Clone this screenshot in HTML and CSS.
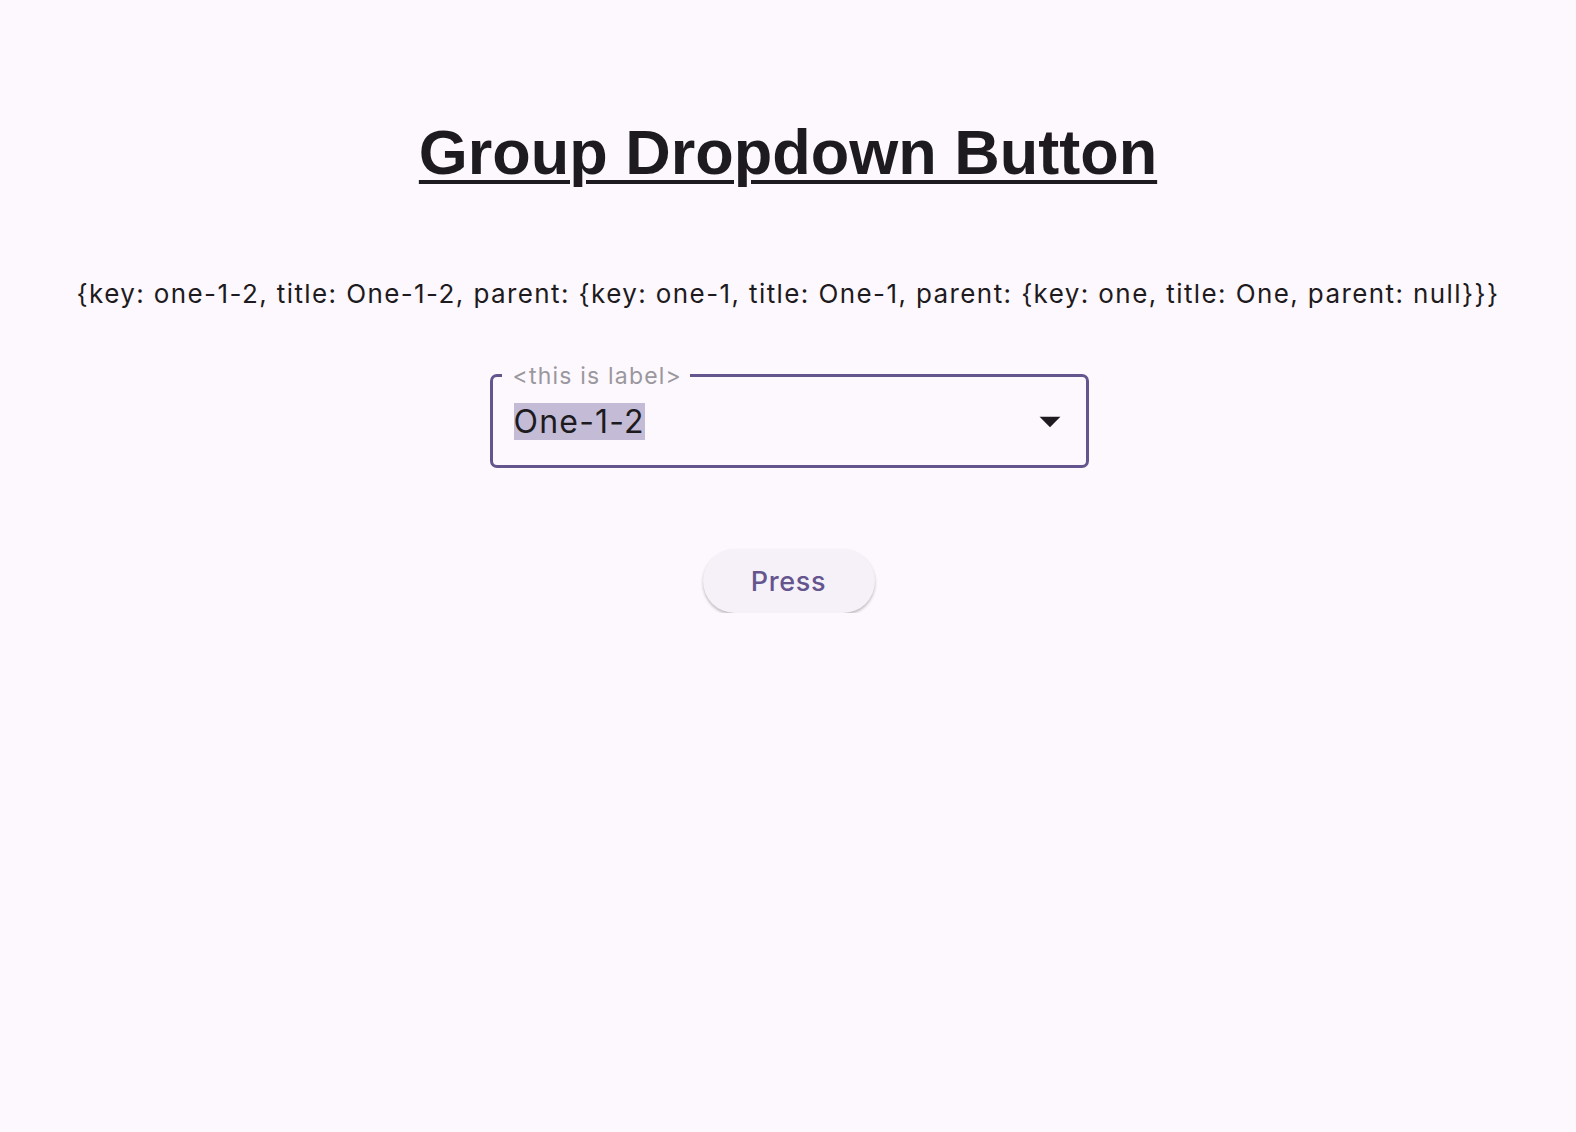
FILE: index.html
```html
<!DOCTYPE html>
<html lang="en">

<head>
    <meta charset="UTF-8">
    <meta name="viewport" content="width=device-width, initial-scale=1.0">
    <title>Group Dropdown Button</title>
    <link rel="stylesheet" href="styles.css">
</head>

<body>
    <main class="page">
        <h1 class="title">Group Dropdown Button</h1>

        <p class="value-line">{key: one-1-2, title: One-1-2, parent: {key: one-1, title: One-1, parent: {key: one, title: One, parent: null}}}</p>

        <div class="dropdown">
            <span class="dropdown-label">&lt;this is label&gt;</span>
            <div class="dropdown-field">
                <span class="dropdown-value">One-1-2</span>
            </div>
            <svg class="dropdown-arrow" viewBox="0 0 24 24">
                <path d="M7 10l5 5 5-5z" fill="#1d1b20" />
            </svg>
        </div>

        <button class="press-btn">Press</button>
    </main>
</body>

</html>
```

FILE: styles.css
```css
body {
    margin: 0;
    background-color: #fdf8fd;
    color: #1d1b20;
    font-family: Inter, "Noto Sans", sans-serif;
}

.page {
    display: flex;
    flex-direction: column;
    align-items: center;
    padding-top: 112px;
}

.title {
    margin: 0;
    font-family: "Liberation Sans", Arial, sans-serif;
    font-size: 63px;
    font-weight: bold;
    line-height: 80px;
    text-decoration: underline;
    text-decoration-thickness: 4px;
    text-underline-offset: 6px;
}

.value-line {
    margin: 86px 0 0 0;
    font-size: 26px;
    line-height: 32px;
    letter-spacing: 1.4px;
}

.dropdown {
    position: relative;
    display: flex;
    align-items: center;
    box-sizing: border-box;
    width: 599px;
    height: 94px;
    margin-top: 64px;
    margin-left: 2px;
    padding: 0 11px 0 21px;
    border: 3px solid #65558f;
    border-radius: 7px;
}

.dropdown-label {
    position: absolute;
    top: -15px;
    left: 9px;
    padding: 0 8px 0 11px;
    background-color: #fdf8fd;
    color: #9a979d;
    font-size: 23px;
    line-height: 28px;
    letter-spacing: 1.2px;
}

.dropdown-field {
    flex: 1;
}

.dropdown-value {
    display: inline-block;
    height: 37px;
    background-color: #c4bcd6;
    font-size: 32px;
    line-height: 37px;
    letter-spacing: 1.2px;
}

.dropdown-arrow {
    width: 50px;
    height: 50px;
}

.press-btn {
    margin-top: 81px;
    margin-left: 1px;
    width: 172px;
    height: 64px;
    padding: 0;
    border: none;
    border-radius: 32px;
    background-color: #f6f1f9;
    color: #65558f;
    font-family: Inter, "Noto Sans", sans-serif;
    font-size: 27px;
    font-weight: 500;
    letter-spacing: 0.7px;
    box-shadow: 0 2px 3px rgba(0, 0, 0, 0.25);
}
```
